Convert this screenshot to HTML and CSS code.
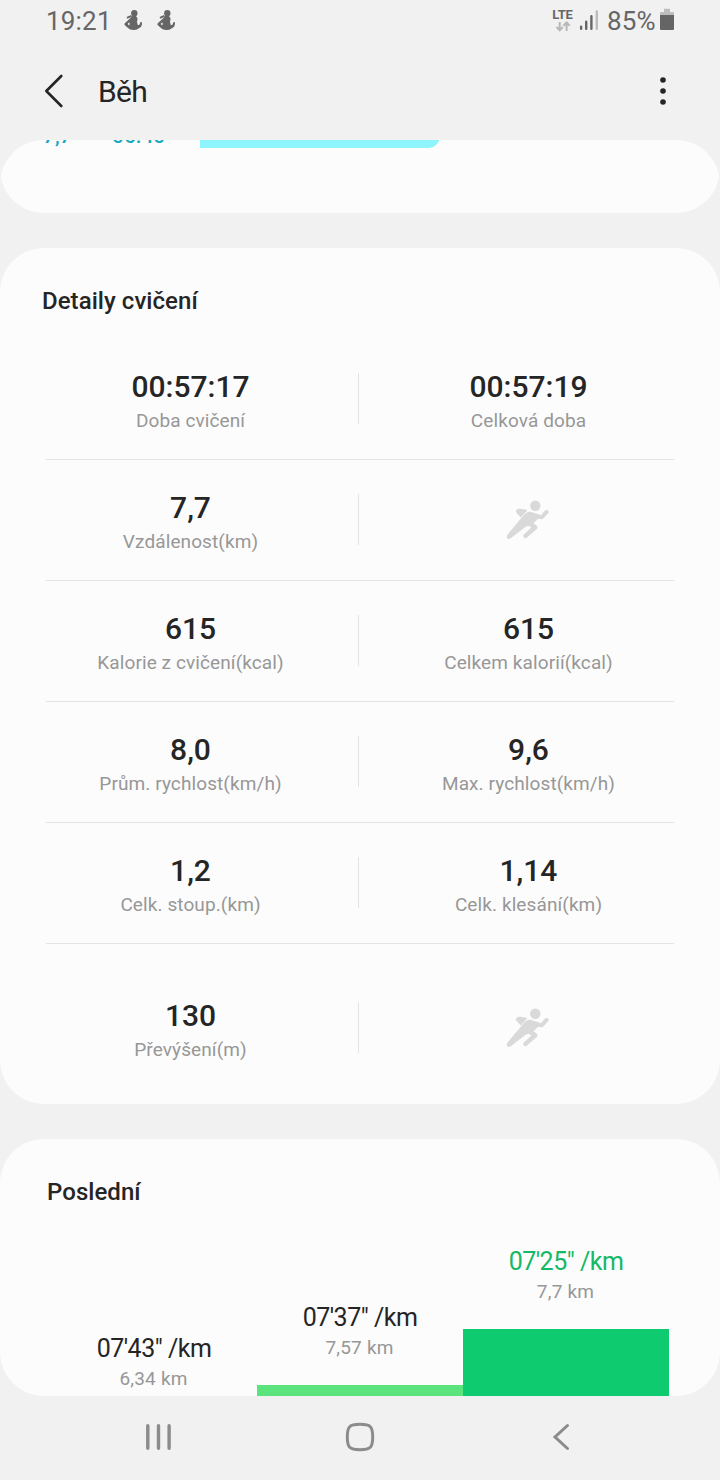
FILE: index.html
```html
<!DOCTYPE html>
<html lang="cs">
<head>
<meta charset="utf-8">
<title>Běh</title>
<link rel="stylesheet" href="styles.css">
</head>
<body>
<svg class="defs" width="0" height="0" aria-hidden="true">
  <symbol id="runner" viewBox="0 0 100 80">
    <circle cx="55.3" cy="25.8" r="5.2"/>
    <path d="M36.1 30.3Q37.3 28.4 40 28.7L46.4 29.7Q47.7 30 46.7 31.1L40.8 37.6L36.6 33Q35.5 31.6 36.1 30.3Z"/>
    <path d="M44.5 34.2Q47.3 31.2 50.5 31.8L59 34.6L58.5 38.5L51.5 45L46 46.5L31 58Q28.8 59.8 27.3 58.2Q26 56.6 27.6 54.6Z"/>
    <path d="M56 36.2L61.8 37.2L66.7 31.9" fill="none" stroke="#d9d9d9" stroke-width="4" stroke-linecap="round" stroke-linejoin="round"/>
    <path d="M49 43L55.2 47.3L45.5 55.9" fill="none" stroke="#d9d9d9" stroke-width="4.6" stroke-linecap="round" stroke-linejoin="round"/>
  </symbol>
  <symbol id="activity" viewBox="0 0 20 22">
    <circle cx="11.3" cy="4.2" r="3.2"/>
    <path d="M9 7H13L14.6 9.5L14 13L14.8 16Q17.2 16 17 13.4L18.9 12.9Q19.6 17.5 15.9 19.2Q13.4 21.2 10.2 21.1Q6.8 21 5 19L1.6 16Q1 14.8 2 14L7 9.4ZM6.4 13.2L4.7 14.8L6 16.6Q7.2 15.3 6.4 13.2Z" fill-rule="evenodd"/>
    <path d="M4 8.9L8.4 6.8" stroke="currentColor" stroke-width="1.9"/>
  </symbol>
</svg>

<header class="status">
  <span class="clock">19:21</span>
  <svg class="act" width="20" height="22"><use href="#activity"/></svg>
  <svg class="act act-second" width="20" height="22"><use href="#activity"/></svg>
  <span class="network">
    <span class="lte">LTE</span>
    <svg width="16" height="11" viewBox="0 0 16 11" fill="none" stroke="#b8b8b8" stroke-width="2"><path d="M4.7 1V9M1.5 6L4.7 9.3L7.8 6M11.6 10V2M8.4 4.8L11.6 1.5L14.8 4.8"/></svg>
  </span>
  <svg class="signal" width="20" height="22" viewBox="0 0 20 22" stroke-width="2.4" stroke-linecap="round" stroke="#666"><path d="M2.1 17.8V19.8M7.2 12.7V19.8M12.4 7.3V19.8"/><path d="M17.8 2.4V19.8" stroke="#bbb"/></svg>
  <span class="percent">85%</span>
  <svg class="battery" width="14" height="23" viewBox="0 0 14 23"><path d="M4 .8H10V4H13Q14 4 14 5V8H0V5Q0 4 1 4H4Z" fill="#bdbdbd"/><path d="M0 7H14V21Q14 22 13 22H1Q0 22 0 21Z" fill="#656565"/></svg>
</header>

<nav class="appbar">
  <svg class="back" width="20" height="34" viewBox="0 0 20 34" fill="none" stroke="#252525" stroke-width="2.6" stroke-linecap="round" stroke-linejoin="round"><path d="M17.3 2L2.3 17L17.3 32"/></svg>
  <h1 class="title">Běh</h1>
  <svg class="more" width="6" height="28" viewBox="0 0 6 28" fill="#252525"><circle cx="3" cy="3" r="2.8"/><circle cx="3" cy="14" r="2.8"/><circle cx="3" cy="25" r="2.8"/></svg>
</nav>

<main class="scroll">
  <section class="pace-clip">
    <div class="pace">
      <span class="pace-km">7,7</span>
      <span class="pace-time">06:40</span>
      <span class="pace-bar"></span>
    </div>
  </section>

  <section class="card details">
    <h2 class="heading">Detaily cvičení</h2>
    <div class="row"><div class="cell"><b>00:57:17</b><span>Doba cvičení</span></div><i class="split"></i><div class="cell"><b>00:57:19</b><span>Celková doba</span></div></div>
    <hr class="rule">
    <div class="row"><div class="cell"><b>7,7</b><span>Vzdálenost(km)</span></div><i class="split"></i><div class="cell"><svg class="runner" width="100" height="80"><use href="#runner"/></svg></div></div>
    <hr class="rule">
    <div class="row"><div class="cell"><b>615</b><span>Kalorie z cvičení(kcal)</span></div><i class="split"></i><div class="cell"><b>615</b><span>Celkem kalorií(kcal)</span></div></div>
    <hr class="rule">
    <div class="row"><div class="cell"><b>8,0</b><span>Prům. rychlost(km/h)</span></div><i class="split"></i><div class="cell"><b>9,6</b><span>Max. rychlost(km/h)</span></div></div>
    <hr class="rule">
    <div class="row"><div class="cell"><b>1,2</b><span>Celk. stoup.(km)</span></div><i class="split"></i><div class="cell"><b>1,14</b><span>Celk. klesání(km)</span></div></div>
    <hr class="rule">
    <div class="row row-last"><div class="cell"><b>130</b><span>Převýšení(m)</span></div><i class="split"></i><div class="cell"><svg class="runner" width="100" height="80"><use href="#runner"/></svg></div></div>
  </section>

  <section class="card recent">
    <h2 class="heading recent-heading">Poslední</h2>
    <div class="chart">
      <div class="col col-low"><b>07'43" /km</b><span>6,34 km</span></div>
      <div class="col col-mid"><b>07'37" /km</b><span>7,57 km</span><i class="bar"></i></div>
      <div class="col col-top"><b>07'25" /km</b><span>7,7 km</span><i class="bar"></i></div>
    </div>
  </section>
</main>

<footer class="navbar">
  <svg width="28" height="28" viewBox="0 0 28 28" stroke="#8b8b8b" stroke-width="3.4" stroke-linecap="round"><path d="M3.8 2.7V25.3M14.5 2.7V25.3M25.1 2.7V25.3"/></svg>
  <svg class="home" width="30" height="30" viewBox="0 0 30 30" fill="none" stroke="#8b8b8b" stroke-width="3"><path d="M15 2.3C25.5 2.3 27.7 4.5 27.7 15S25.5 27.7 15 27.7S2.3 25.5 2.3 15S4.5 2.3 15 2.3Z"/></svg>
  <svg width="20" height="28" viewBox="0 0 20 28" fill="none" stroke="#8b8b8b" stroke-width="3" stroke-linecap="round"><path d="M16.5 2.5L4 14L16.5 25.5"/></svg>
</footer>
</body>
</html>
```
FILE: styles.css
```css
* { box-sizing: border-box; }
body {
  margin: 0;
  width: 720px;
  height: 1480px;
  overflow: hidden;
  display: flex;
  flex-direction: column;
  background: #f1f1f1;
  color: #252525;
  font-family: Roboto, "Noto Sans", sans-serif;
}
h1, h2 { margin: 0; }
.defs { display: block; position: absolute; }

.status {
  display: flex;
  align-items: flex-start;
  height: 42px;
  padding: 9px 46px 0 46px;
  color: #666;
}
.clock, .percent { font-size: 26px; line-height: 25px; letter-spacing: .2px; }
.clock { width: 77px; }
.act { fill: currentColor; }
.act-second { margin-left: 13px; }
.network { display: flex; flex-direction: column; align-items: center; margin-left: auto; width: 21px; }
.lte { font-size: 13px; line-height: 12px; font-weight: 700; letter-spacing: -.2px; }
.signal { margin-left: 6px; }
.percent { margin-left: 8px; width: 53px; white-space: nowrap; }
.battery { margin-top: -1px; }

.appbar {
  display: flex;
  align-items: center;
  height: 98px;
  padding: 0 54px 0 44px;
}
.title { margin-left: 34px; font-size: 30px; font-weight: 400; letter-spacing: -.7px; }
.more { margin-left: auto; }

.scroll { height: 1256px; overflow: hidden; }

/* The upper card is cut off by the rounded top of the scroll area. */
.pace-clip { height: 73px; overflow: hidden; border-radius: 44px 44px 0 0; }
.pace {
  display: flex;
  align-items: flex-start;
  height: 73px;
  padding-left: 43px;
  border-radius: 0 0 44px 44px;
  background: #fcfcfc;
  color: #18a9c0;
  font-size: 21px;
  font-weight: 500;
  line-height: 24px;
}
.pace-km, .pace-time { margin-top: -16px; }
.pace-km { width: 69px; }
.pace-time { width: 88px; }
.pace-bar { width: 240px; height: 24px; margin-top: -16px; border-radius: 0 16px 16px 0; background: #8ff5fc; }

.card { overflow: hidden; background: #fcfcfc; }
.details { height: 856px; margin-top: 35px; border-radius: 44px; }
.heading { height: 91px; padding: 38px 0 0 42px; font-size: 24px; line-height: 30px; font-weight: 500; letter-spacing: .05px; }
.row { display: grid; grid-template-columns: 335px 1px 339px; height: 120px; padding-left: 23px; }
.row-last { height: 160px; padding-top: 24px; }
.rule { height: 1px; margin: 0 46px; border: 0; background: #e4e4e4; }
.split { height: 51px; margin-top: 34px; background: #e4e4e4; }
.cell { display: flex; flex-direction: column; align-items: center; padding-top: 30px; }
.cell b { font-size: 30px; line-height: 36px; font-weight: 500; }
.cell span { font-size: 19px; line-height: 32px; letter-spacing: .1px; color: #979797; }
.runner { margin: -10px 0 0 3px; fill: #d9d9d9; }

.recent { height: 257px; margin-top: 35px; border-radius: 44px; }
.recent-heading { padding-left: 47px; }
.chart { display: flex; height: 166px; padding-left: 51px; }
.col { display: flex; flex-direction: column; align-items: center; width: 206px; }
.col b { font-size: 25px; line-height: 32px; font-weight: 400; letter-spacing: -.5px; }
.col span { padding-right: 1px; font-size: 19px; line-height: 28px; letter-spacing: .2px; color: #979797; }
.col-low { padding-top: 103px; }
.col-mid { padding-top: 72px; }
.col-top { padding-top: 16px; }
.col-top b { color: #14b866; }
.bar { flex: 1; align-self: stretch; margin-top: 23px; background: #0fcb70; }
.col-mid .bar { background: #5be37e; }

.navbar {
  display: flex;
  align-items: center;
  height: 84px;
  padding: 0 149px 3px 144px;
}
.home { margin: 0 auto 0 173px; }
```
